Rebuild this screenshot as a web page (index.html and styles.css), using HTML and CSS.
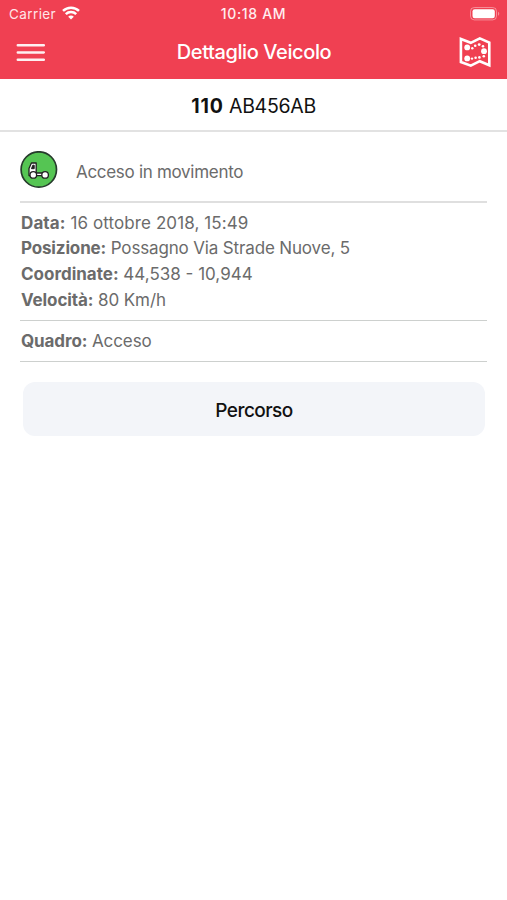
FILE: index.html
```html
<!DOCTYPE html>
<html lang="it">
<head>
    <meta charset="UTF-8">
    <meta name="viewport" content="width=device-width, initial-scale=1.0">
    <title>Dettaglio Veicolo</title>
    <link rel="stylesheet" href="styles.css">
</head>
<body>
    <!-- Header -->
    <header class="header">
        <div class="status-bar">
            <div class="carrier">
                <span>Carrier</span>
                <svg class="wifi" width="18" height="14" viewBox="0 0 18 14" fill="none" stroke="#fff" stroke-width="2.5">
                    <path d="M1 4.9a11.5 11.5 0 0 1 16 0"/>
                    <path d="M3.8 8.2a7.5 7.5 0 0 1 10.4 0"/>
                    <path d="M9 13.6L6.2 10.8a3.9 3.9 0 0 1 5.6 0z" fill="#fff" stroke="none"/>
                </svg>
            </div>
            <span class="time">10:18 AM</span>
            <svg class="battery" width="30" height="14" viewBox="0 0 30 14">
                <rect x="0.5" y="0.5" width="26" height="12.4" rx="3.8" fill="none" stroke="#fff" stroke-opacity="0.4"/>
                <rect x="2.5" y="2.2" width="22.3" height="9" rx="2.2" fill="#fff"/>
                <path d="M28 4.8a2.2 2.2 0 0 1 0 4z" fill="#fff" fill-opacity="0.4"/>
            </svg>
        </div>
        <div class="nav-bar">
            <button class="icon-btn" aria-label="Menu">
                <svg width="29" height="20" viewBox="0 0 29 20" stroke="#fff" stroke-width="2.5" stroke-linecap="round">
                    <path d="M1.8 3.2h26M1.8 10.4h26M1.8 17.7h26" stroke-opacity="0.92"/>
                </svg>
            </button>
            <h1>Dettaglio Veicolo</h1>
            <button class="icon-btn" aria-label="Mappa">
                <svg width="32" height="32" viewBox="0 0 32 32" fill="none">
                    <path d="M1.9 3L11.8 6.8 20.8 2.4 30.3 6.6V29.2L20.8 25.2 11.8 29.7 1.9 26z" stroke="#fff" stroke-width="2.6"/>
                    <g fill="#fff">
                        <circle cx="8.2" cy="11.4" r="2.9"/>
                        <circle cx="25" cy="15.2" r="2.9"/>
                        <circle cx="8.2" cy="22.4" r="2.9"/>
                        <circle cx="13.3" cy="12.2" r="1.2"/>
                        <circle cx="16.2" cy="9.7" r="1.3"/>
                        <circle cx="20.2" cy="8.6" r="1.4"/>
                        <circle cx="24" cy="10.2" r="1.3"/>
                        <circle cx="13" cy="22.6" r="1.2"/>
                        <circle cx="16.6" cy="21.8" r="1.3"/>
                        <circle cx="20.4" cy="21.4" r="1.3"/>
                        <circle cx="24.8" cy="20.2" r="1.3"/>
                    </g>
                </svg>
            </button>
        </div>
    </header>

    <div class="plate"><b>110</b> AB456AB</div>

    <!-- Vehicle details -->
    <main class="container">
        <div class="status">
            <svg width="38" height="38" viewBox="0 0 38 38">
                <circle cx="18.8" cy="18.5" r="17.7" fill="#55c553" stroke="#263b2c" stroke-width="1.7"/>
                <g stroke="#202020" stroke-width="1.3" stroke-linejoin="round">
                    <path d="M9 24.6V17.4L11.4 12H16.2V22H27V24.6z" fill="#fff"/>
                    <path d="M11.5 17.7L12.8 14.2H14.2V17.7z" fill="#202020" stroke-width="1"/>
                    <circle cx="13.3" cy="23.9" r="3.3" fill="#fff"/>
                    <circle cx="25.1" cy="23.9" r="3.3" fill="#fff"/>
                </g>
            </svg>
            <span>Acceso in movimento</span>
        </div>
        <div class="info">
            <p class="data"><b>Data:</b> 16 ottobre 2018, 15:49</p>
            <p class="position"><b>Posizione:</b> Possagno Via Strade Nuove, 5</p>
            <p class="coords"><b>Coordinate:</b> 44,538 - 10,944</p>
            <p class="speed"><b>Velocità:</b> 80 Km/h</p>
        </div>
        <div class="info">
            <p class="ignition"><b>Quadro:</b> Acceso</p>
        </div>
        <button class="route-btn">Percorso</button>
    </main>
</body>
</html>
```
FILE: styles.css
```css
body {
    font-family: Inter, "Liberation Sans", sans-serif;
    margin: 0;
    padding: 0;
    background-color: #fff;
    color: #6b6b6b;
}
b {
    font-weight: 700;
}
.header {
    height: 79px;
    background-color: #f04052;
    color: #fff;
}
.status-bar {
    display: grid;
    grid-template-columns: 1fr auto 1fr;
    align-items: center;
    height: 27px;
    padding: 0 7px 0 9px;
    font-size: 13.5px;
}
.carrier {
    display: flex;
    align-items: center;
    gap: 6px;
    color: #ffe5e8;
    letter-spacing: 0.4px;
}
.wifi {
    margin-top: -2px;
}
.time {
    margin-right: 2px;
    font-size: 14px;
    font-weight: 500;
    letter-spacing: 0.65px;
    color: #ffeef0;
}
.battery {
    justify-self: end;
}
.nav-bar {
    display: flex;
    justify-content: space-between;
    align-items: center;
    height: 50px;
    padding: 0 16px;
}
.nav-bar h1 {
    margin: 0 0 0 4px;
    font-size: 20px;
    font-weight: 500;
    letter-spacing: -0.4px;
}
.icon-btn {
    display: flex;
    padding: 0;
    border: none;
    background: none;
    cursor: pointer;
}
.plate {
    height: 51px;
    line-height: 54px;
    border-bottom: 2px solid #e2e2e2;
    text-align: center;
    font-size: 19.5px;
    letter-spacing: -0.3px;
    color: #111;
}
.plate b {
    letter-spacing: 0.9px;
}
.container {
    padding: 0 20px;
}
.status {
    display: flex;
    align-items: center;
    gap: 18px;
    height: 69px;
    border-bottom: 2px solid #dfdfdf;
    font-size: 17px;
    letter-spacing: -0.3px;
}
.status svg {
    margin-top: 6px;
}
.status span {
    margin-top: 10px;
}
.info {
    padding: 7.5px 1px 6.5px;
    border-bottom: 1px solid #cdd0ce;
    font-size: 17px;
    line-height: 25.75px;
}
.info p {
    margin: 0;
}
.data {
    letter-spacing: 0.1px;
}
.position {
    letter-spacing: -0.15px;
}
.speed, .ignition {
    letter-spacing: -0.1px;
}
.route-btn {
    display: block;
    width: 462px;
    height: 54px;
    margin: 20px auto 0;
    padding: 3px 0 0 1px;
    border: none;
    border-radius: 12px;
    background: #f3f5f9;
    font-family: inherit;
    font-size: 19px;
    font-weight: 500;
    letter-spacing: -0.55px;
    color: #111;
    cursor: pointer;
}
```
